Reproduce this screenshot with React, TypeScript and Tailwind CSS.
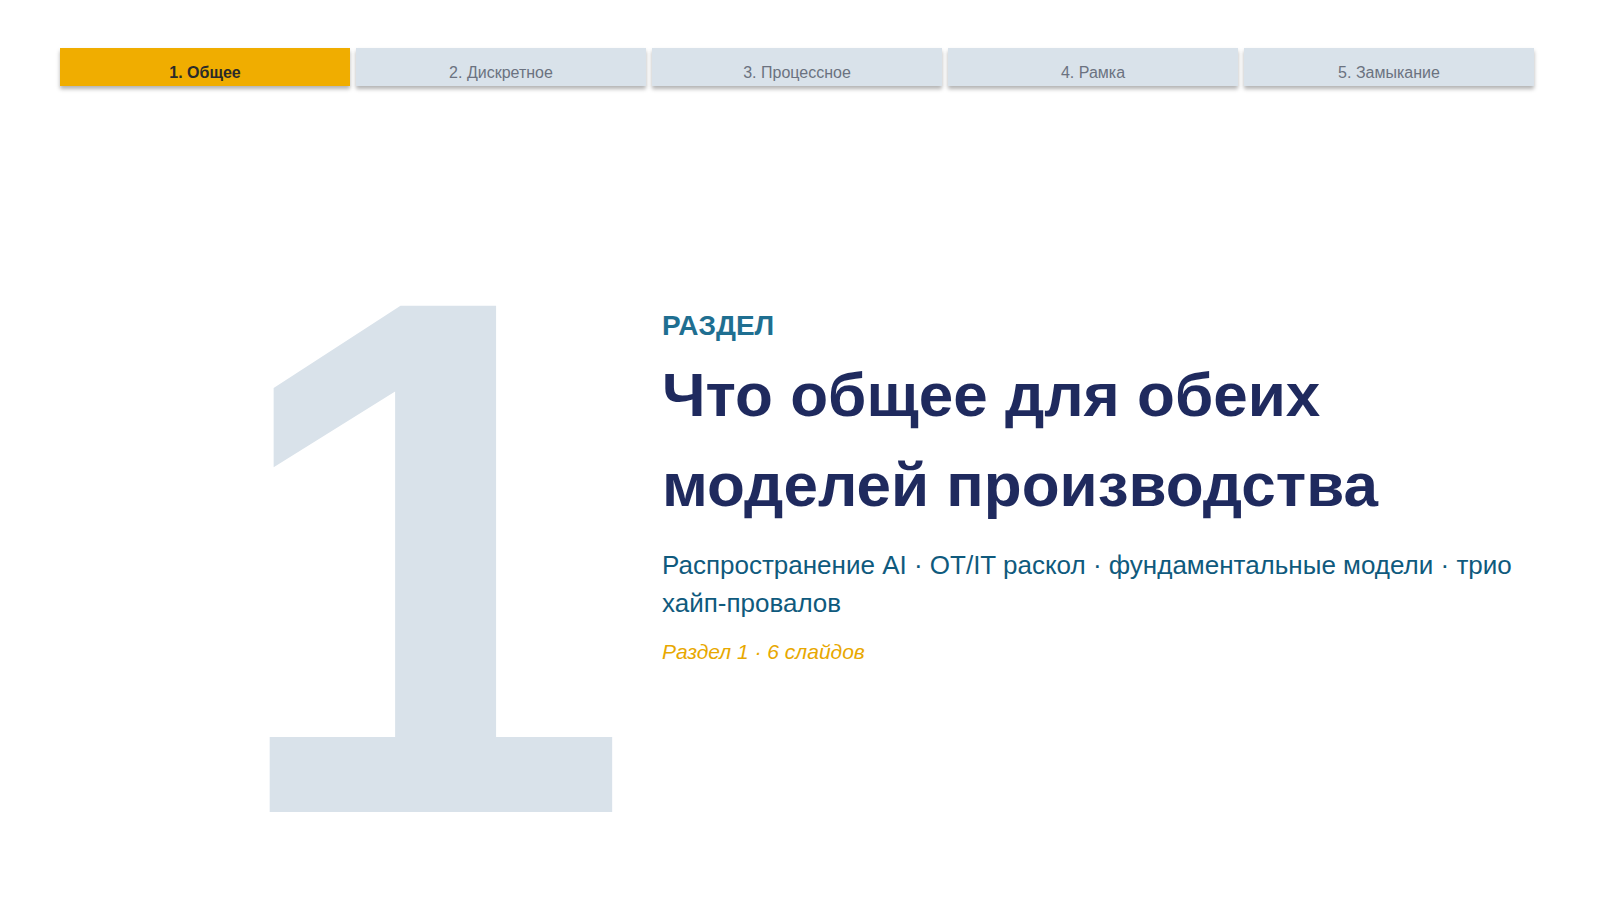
import React from 'react';

const tabs = ['1. Общее', '2. Дискретное', '3. Процессное', '4. Рамка', '5. Замыкание'];

export default function App() {
  return (
    <div className="w-[1600px] h-[900px] bg-white overflow-hidden" style={{ fontFamily: '"Liberation Sans", Arial, sans-serif' }}>
      {/* Section tabs */}
      <div className="flex gap-[6px] pl-[60px] pr-[66px] pt-[48px]">
        {tabs.map((t, i) => (
          <div
            key={t}
            className={`flex-1 h-[38px] flex items-end justify-center pb-[1px] text-[16px] shadow-[0_3px_4px_rgba(0,0,0,0.3)] ${
              i === 0 ? 'bg-[#f0ad00] text-[#2a2a2a] font-bold' : 'bg-[#d9e2ea] text-[#6b7280]'
            }`}
          >
            {t}
          </div>
        ))}
      </div>

      <div className="flex">
        <div className="w-[662px] shrink-0 flex justify-center pl-[214px] pr-[20px]">
          <div className="text-[736px] leading-none font-bold text-[#d9e2ea] mt-[103px] select-none">1</div>
        </div>
        <div className="pt-[223px] pr-[60px]">
          <div className="text-[28px] font-bold text-[#1f6f91] leading-[34px]">РАЗДЕЛ</div>
          <h1 className="mt-[7px] text-[62px] font-bold text-[#1f2a5e] leading-[90px]">
            Что общее для обеих
            <br />
            моделей производства
          </h1>
          <p className="mt-[16px] text-[26px] text-[#0f5a7d] leading-[38px]">
            Распространение AI · OT/IT раскол · фундаментальные модели · трио <span className="whitespace-nowrap">хайп-провалов</span>
          </p>
          <p className="mt-[14px] text-[21px] italic text-[#e8a800]">Раздел 1 · 6 слайдов</p>
        </div>
      </div>
    </div>
  );
}
